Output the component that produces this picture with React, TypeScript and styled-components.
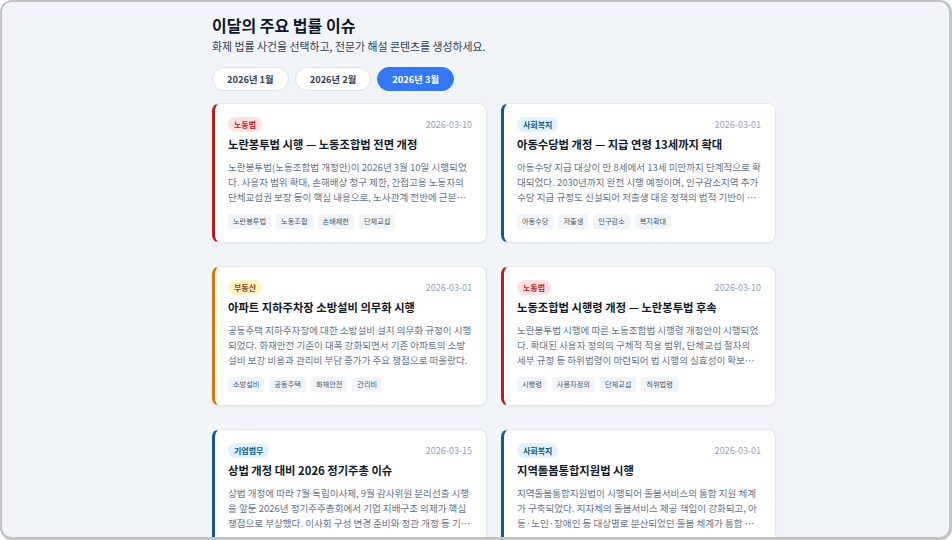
import React, { useState } from "react";
import styled, { createGlobalStyle } from "styled-components";

const Global = createGlobalStyle`
  html, body { margin: 0; padding: 0; background: #ffffff; }
  body { font-family: "Noto Sans CJK KR", "Noto Sans", sans-serif; }
  * { box-sizing: border-box; }
`;

type Cat = "labor" | "welfare" | "estate" | "corp";

const catStyle: Record<Cat, { bar: string; bg: string; fg: string }> = {
  labor: { bar: "#b91c1c", bg: "#fee2e2", fg: "#b91c1c" },
  welfare: { bar: "#0f5a94", bg: "#e0f2fe", fg: "#075985" },
  estate: { bar: "#d97706", bg: "#fef3c7", fg: "#92400e" },
  corp: { bar: "#0f5a94", bg: "#e0f2fe", fg: "#075985" },
};

const Frame = styled.div`
  width: 952px;
  height: 540px;
  overflow: hidden;
  background: #f1f5f9;
  border-style: solid;
  border-color: #c4c4c4;
  border-width: 2px 3px 3px 2px;
  border-radius: 12px;
  padding: 13px 0 0 210px;
`;

const Column = styled.div`
  width: 565px;
  display: flex;
  flex-direction: column;
`;

const Heading = styled.h1`
  margin: 0;
  font-size: 16px;
  line-height: 20px;
  font-weight: 700;
  color: #0f172a;
`;

const Sub = styled.p`
  margin: 4px 0 0;
  font-size: 10.9px;
  line-height: 14px;
  color: #334155;
`;

const Pills = styled.div`
  display: flex;
  gap: 6px;
  margin-top: 14px;
`;

const Pill = styled.button<{ $active?: boolean }>`
  height: 24px;
  padding: 0 14px;
  border-radius: 999px;
  border: 1px solid ${(p) => (p.$active ? "#3478f6" : "#dde3ec")};
  background: ${(p) => (p.$active ? "#3478f6" : "#ffffff")};
  color: ${(p) => (p.$active ? "#ffffff" : "#334155")};
  font-family: inherit;
  font-size: 9.3px;
  font-weight: 700;
  cursor: pointer;
`;

const Grid = styled.div`
  margin-top: 12px;
  display: grid;
  grid-template-columns: 275px 275px;
  column-gap: 14px;
  row-gap: 23px;
`;

const Card = styled.article<{ $cat: Cat }>`
  background: #ffffff;
  border: 1px solid #e2e8f0;
  border-left: 3px solid ${(p) => catStyle[p.$cat].bar};
  border-radius: 8px;
  padding: 13px 14px 13px 13px;
  box-shadow: 0 1px 2px rgba(15, 23, 42, 0.04);
  display: flex;
  flex-direction: column;
`;

const CardHead = styled.div`
  display: flex;
  align-items: center;
  justify-content: space-between;
  height: 15px;
`;

const Badge = styled.span<{ $cat: Cat }>`
  height: 15px;
  padding: 0 6px;
  border-radius: 999px;
  background: ${(p) => catStyle[p.$cat].bg};
  color: ${(p) => catStyle[p.$cat].fg};
  font-size: 8px;
  font-weight: 700;
  display: inline-flex;
  align-items: center;
`;

const DateText = styled.span`
  font-size: 9px;
  color: #94a3b8;
`;

const Title = styled.h2`
  margin: 5px 0 0;
  font-size: 11.3px;
  line-height: 15px;
  font-weight: 700;
  color: #111827;
  white-space: nowrap;
`;

const Desc = styled.p`
  margin: 8px 0 0;
  font-size: 9.55px;
  line-height: 15px;
  color: #64748b;
  display: -webkit-box;
  -webkit-line-clamp: 3;
  -webkit-box-orient: vertical;
  overflow: hidden;
  height: 45px;
`;

const Tags = styled.div`
  display: flex;
  gap: 5px;
  margin-top: 9px;
`;

const Tag = styled.span`
  height: 15px;
  padding: 0 5px;
  border-radius: 3px;
  background: #f1f5f9;
  color: #475569;
  font-size: 7.2px;
  line-height: 15px;
  display: inline-flex;
  align-items: center;
`;

type Issue = {
  cat: Cat;
  label: string;
  date: string;
  title: string;
  desc: string;
  tags: string[];
};

const issues: Issue[] = [
  {
    cat: "labor",
    label: "노동법",
    date: "2026-03-10",
    title: "노란봉투법 시행 — 노동조합법 전면 개정",
    desc: "노란봉투법(노동조합법 개정안)이 2026년 3월 10일 시행되었다. 사용자 범위 확대, 손해배상 청구 제한, 간접고용 노동자의 단체교섭권 보장 등이 핵심 내용으로, 노사관계 전반에 근본적인 변화가 예상된다.",
    tags: ["노란봉투법", "노동조합", "손배제한", "단체교섭"],
  },
  {
    cat: "welfare",
    label: "사회복지",
    date: "2026-03-01",
    title: "아동수당법 개정 — 지급 연령 13세까지 확대",
    desc: "아동수당 지급 대상이 만 8세에서 13세 미만까지 단계적으로 확대되었다. 2030년까지 완전 시행 예정이며, 인구감소지역 추가수당 지급 규정도 신설되어 저출생 대응 정책의 법적 기반이 강화되었다.",
    tags: ["아동수당", "저출생", "인구감소", "복지확대"],
  },
  {
    cat: "estate",
    label: "부동산",
    date: "2026-03-01",
    title: "아파트 지하주차장 소방설비 의무화 시행",
    desc: "공동주택 지하주차장에 대한 소방설비 설치 의무화 규정이 시행되었다. 화재안전 기준이 대폭 강화되면서 기존 아파트의 소방설비 보강 비용과 관리비 부담 증가가 주요 쟁점으로 떠올랐다.",
    tags: ["소방설비", "공동주택", "화재안전", "관리비"],
  },
  {
    cat: "labor",
    label: "노동법",
    date: "2026-03-10",
    title: "노동조합법 시행령 개정 — 노란봉투법 후속",
    desc: "노란봉투법 시행에 따른 노동조합법 시행령 개정안이 시행되었다. 확대된 사용자 정의의 구체적 적용 범위, 단체교섭 절차의 세부 규정 등 하위법령이 마련되어 법 시행의 실효성이 확보되었다.",
    tags: ["시행령", "사용자정의", "단체교섭", "하위법령"],
  },
  {
    cat: "corp",
    label: "기업법무",
    date: "2026-03-15",
    title: "상법 개정 대비 2026 정기주총 이슈",
    desc: "상법 개정에 따라 7월 독립이사제, 9월 감사위원 분리선출 시행을 앞둔 2026년 정기주주총회에서 기업 지배구조 의제가 핵심 쟁점으로 부상했다. 이사회 구성 변경 준비와 정관 개정 등 기업들의 대응이 분주하다.",
    tags: ["상법개정", "정기주총", "지배구조", "독립이사"],
  },
  {
    cat: "welfare",
    label: "사회복지",
    date: "2026-03-01",
    title: "지역돌봄통합지원법 시행",
    desc: "지역돌봄통합지원법이 시행되어 돌봄서비스의 통합 지원 체계가 구축되었다. 지자체의 돌봄서비스 제공 책임이 강화되고, 아동·노인·장애인 등 대상별로 분산되었던 돌봄 체계가 통합 관리된다.",
    tags: ["돌봄통합", "지역돌봄", "지자체", "통합지원"],
  },
];

const months = ["2026년 1월", "2026년 2월", "2026년 3월"];

export default function App() {
  const [month, setMonth] = useState(2);
  return (
    <>
      <Global />
      <Frame>
        <Column>
          <Heading>이달의 주요 법률 이슈</Heading>
          <Sub>화제 법률 사건을 선택하고, 전문가 해설 콘텐츠를 생성하세요.</Sub>
          <Pills>
            {months.map((m, i) => (
              <Pill key={m} $active={i === month} onClick={() => setMonth(i)}>
                {m}
              </Pill>
            ))}
          </Pills>
          <Grid>
            {issues.map((it, i) => (
              <Card key={i} $cat={it.cat}>
                <CardHead>
                  <Badge $cat={it.cat}>{it.label}</Badge>
                  <DateText>{it.date}</DateText>
                </CardHead>
                <Title>{it.title}</Title>
                <Desc>{it.desc}</Desc>
                <Tags>
                  {it.tags.map((t) => (
                    <Tag key={t}>{t}</Tag>
                  ))}
                </Tags>
              </Card>
            ))}
          </Grid>
        </Column>
      </Frame>
    </>
  );
}
